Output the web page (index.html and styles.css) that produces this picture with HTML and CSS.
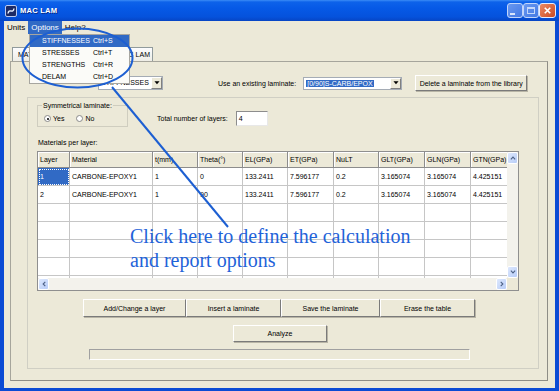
FILE: index.html
```html
<!DOCTYPE html>
<html lang="en">
<head>
    <meta charset="UTF-8">
    <meta name="viewport" content="width=device-width, initial-scale=1.0">
    <title>MAC LAM</title>
    <link rel="stylesheet" href="styles.css">
</head>
<body>
    <div class="window">
        <div class="titlebar">
            <svg class="app-icon" viewBox="0 0 12 12">
                <rect x="0.5" y="0.5" width="11" height="11" rx="1.5" fill="#1c2a66" stroke="#b9c9f0"/>
                <path d="M3 8.5 C4 2.5 8 9.5 9 3.5" fill="none" stroke="#e8f0ff" stroke-width="1.4"/>
            </svg>
            <span class="title">MAC LAM</span>
            <div class="controls">
                <span class="ctl ctl-min"><span class="min-bar"></span></span>
                <span class="ctl ctl-max"><span class="max-box"></span></span>
                <span class="ctl ctl-close">
                    <svg viewBox="0 0 10 10"><path d="M2.5 2.5 L7.5 7.5 M7.5 2.5 L2.5 7.5" stroke="#fff" stroke-width="1.5"/></svg>
                </span>
            </div>
        </div>

        <div class="frame">
            <div class="menubar">
                <span class="menu-item">Units</span>
                <span class="menu-item open">Options</span>
                <span class="menu-item">Help?</span>
            </div>

            <div class="tabs">
                <span class="tab tab-materials">MATERIALS</span>
                <span class="tab tab-lam">MAC LAM</span>
            </div>

            <div class="panel">
                <div class="top-row">
                    <div class="combo combo-units">
                        <span class="combo-value">STIFFNESSES</span>
                        <span class="combo-arrow"><svg viewBox="0 0 7 4"><path d="M0.5 0 L6.5 0 L3.5 3.5 Z" fill="#000"/></svg></span>
                    </div>
                    <span class="lib-label">Use an existing laminate:</span>
                    <div class="combo combo-lib">
                        <span class="combo-value"><span class="sel-text">[0/90]S-CARB/EPOX</span></span>
                        <span class="combo-arrow"><svg viewBox="0 0 7 4"><path d="M0.5 0 L6.5 0 L3.5 3.5 Z" fill="#000"/></svg></span>
                    </div>
                    <button class="btn btn-delete">Delete a laminate from the library</button>
                </div>

                <div class="group">
                    <div class="sym-row">
                        <div class="sym-box">
                            <span class="sym-legend">Symmetrical laminate:</span>
                            <div class="radios">
                                <span class="radio checked"></span><span class="radio-label">Yes</span>
                                <span class="radio"></span><span class="radio-label">No</span>
                            </div>
                        </div>
                        <span class="layers-label">Total number of layers:</span>
                        <span class="text-input">4</span>
                    </div>

                    <div class="caption">Materials per layer:</div>

                    <div class="grid-box">
                        <div class="grid-main">
                            <div class="grid-view">
                                <table class="grid">
                                    <colgroup>
                                        <col style="width:32px"><col style="width:83px"><col style="width:45px"><col style="width:45px"><col style="width:45px">
                                        <col style="width:46px"><col style="width:45px"><col style="width:46px"><col style="width:46px"><col style="width:46px">
                                    </colgroup>
                                    <thead>
                                        <tr><th>Layer</th><th>Material</th><th>t(mm)</th><th>Theta(°)</th><th>EL(GPa)</th><th>ET(GPa)</th><th>NuLT</th><th>GLT(GPa)</th><th>GLN(GPa)</th><th>GTN(GPa)</th></tr>
                                    </thead>
                                    <tbody>
                                        <tr><td class="current">1</td><td>CARBONE-EPOXY1</td><td>1</td><td>0</td><td>133.2411</td><td>7.596177</td><td>0.2</td><td>3.165074</td><td>3.165074</td><td>4.425151</td></tr>
                                        <tr><td>2</td><td>CARBONE-EPOXY1</td><td>1</td><td>90</td><td>133.2411</td><td>7.596177</td><td>0.2</td><td>3.165074</td><td>3.165074</td><td>4.425151</td></tr>
                                        <tr><td></td><td></td><td></td><td></td><td></td><td></td><td></td><td></td><td></td><td></td></tr>
                                        <tr><td></td><td></td><td></td><td></td><td></td><td></td><td></td><td></td><td></td><td></td></tr>
                                        <tr><td></td><td></td><td></td><td></td><td></td><td></td><td></td><td></td><td></td><td></td></tr>
                                        <tr><td></td><td></td><td></td><td></td><td></td><td></td><td></td><td></td><td></td><td></td></tr>
                                        <tr><td></td><td></td><td></td><td></td><td></td><td></td><td></td><td></td><td></td><td></td></tr>
                                    </tbody>
                                </table>
                            </div>
                            <div class="vscroll">
                                <span class="sb-btn"><svg viewBox="0 0 7 5"><path d="M1 4 L3.5 1.5 L6 4" fill="none" stroke="#4d6185" stroke-width="1.3"/></svg></span>
                                <span class="sb-track"></span>
                                <span class="sb-btn"><svg viewBox="0 0 7 5"><path d="M1 1 L3.5 3.5 L6 1" fill="none" stroke="#4d6185" stroke-width="1.3"/></svg></span>
                            </div>
                        </div>
                        <div class="hscroll">
                            <span class="sb-btn"><svg viewBox="0 0 5 7"><path d="M4 1 L1.5 3.5 L4 6" fill="none" stroke="#4d6185" stroke-width="1.3"/></svg></span>
                            <span class="sb-track"></span>
                            <span class="sb-btn"><svg viewBox="0 0 5 7"><path d="M1 1 L3.5 3.5 L1 6" fill="none" stroke="#4d6185" stroke-width="1.3"/></svg></span>
                            <span class="sb-corner"></span>
                        </div>
                    </div>

                    <div class="btn-row">
                        <button class="btn btn-wide">Add/Change a layer</button>
                        <button class="btn btn-mid">Insert a laminate</button>
                        <button class="btn btn-save">Save the laminate</button>
                        <button class="btn btn-mid">Erase the table</button>
                    </div>

                    <div class="analyze-row">
                        <button class="btn btn-analyze">Analyze</button>
                    </div>

                    <div class="progress"></div>
                </div>
            </div>
        </div>

        <!-- open Options menu -->
        <div class="dropdown">
            <div class="dd-item active"><span class="dd-label">STIFFNESSES</span><span>Ctrl+S</span></div>
            <div class="dd-item"><span class="dd-label">STRESSES</span><span>Ctrl+T</span></div>
            <div class="dd-item"><span class="dd-label">STRENGTHS</span><span>Ctrl+R</span></div>
            <div class="dd-item"><span class="dd-label">DELAM</span><span>Ctrl+D</span></div>
        </div>

        <!-- annotation -->
        <svg class="callout-shape" viewBox="0 0 559 391">
            <ellipse cx="77.5" cy="58" rx="55" ry="29.5" fill="none" stroke="#1d5fd2" stroke-width="2"/>
            <line x1="112" y1="87" x2="228" y2="227" stroke="#1d5fd2" stroke-width="2"/>
        </svg>
        <div class="callout-text">Click here to define the calculation<br>and report options</div>
    </div>
</body>
</html>
```

FILE: styles.css
```css
* {
    box-sizing: border-box;
}
html, body {
    margin: 0;
    padding: 0;
}
body {
    font-family: 'Liberation Sans', Arial, sans-serif;
    font-size: 7px;
    color: #000;
    background: #ece9d8;
}
.window {
    position: relative;
    width: 559px;
    height: 391px;
    overflow: hidden;
    display: flex;
    flex-direction: column;
}

/* title bar */
.titlebar {
    height: 21px;
    flex: none;
    display: flex;
    align-items: center;
    padding: 0 3px 0 5px;
    background: linear-gradient(#3b8cf6 0, #0d62ea 2px, #0659e6 40%, #0552dc 80%, #0745c4 100%);
    color: #fff;
}
.app-icon {
    width: 12px;
    height: 12px;
    margin-right: 3px;
}
.title {
    font-weight: bold;
    font-size: 7.6px;
    letter-spacing: 0.2px;
    text-shadow: 1px 1px 0 #0a2d8a;
}
.controls {
    margin-left: auto;
    display: flex;
}
.ctl {
    width: 16px;
    height: 15px;
    border: 1px solid #e4ecff;
    border-radius: 3px;
    display: flex;
    align-items: center;
    justify-content: center;
    background: linear-gradient(135deg, #7aa3f2, #4f80e6);
    opacity: 0.85;
}
.ctl-close {
    width: 17px;
    background: linear-gradient(135deg, #ea8a66, #cc4a22);
    opacity: 1;
}
.ctl-close svg {
    width: 11px;
    height: 11px;
}
.min-bar {
    width: 5px;
    height: 2px;
    background: #fff;
    margin: 7px 5px 0 0;
}
.max-box {
    width: 8px;
    height: 7px;
    border: 1px solid #e6eeff;
    border-top-width: 2px;
}

/* window body */
.frame {
    flex: 1;
    background: #ece9d8;
    border: 4px solid #0b4bd4;
    border-top: 0;
    border-bottom-width: 3px;
}
.menubar {
    height: 13px;
    display: flex;
    font-size: 8px;
}
.menu-item {
    padding: 0 3px;
    line-height: 13px;
}
.menu-item.open {
    background: #316ac5;
    color: #fff;
}

.tabs {
    margin-top: 13px;
    height: 14px;
    display: flex;
    padding-left: 8px;
}
.tab {
    line-height: 13px;
    border: 1px solid #919b9c;
    border-bottom: none;
    background: linear-gradient(#fcfcfe, #eeede6);
    padding: 0 5px;
}
.tab-materials {
    width: 100px;
}
.tab-lam {
    width: 41px;
    padding: 0 2px;
    text-align: right;
    white-space: nowrap;
}

.panel {
    margin-left: 6px;
    width: 538px;
    height: 320px;
    border: 1px solid #a6a59c;
    border-right-color: #8e8d86;
    border-bottom-color: #8e8d86;
    padding-top: 13px;
}
.top-row {
    height: 16px;
    display: flex;
    align-items: center;
}

.combo {
    height: 14px;
    display: flex;
    background: #fff;
    border: 1px solid #a5acb5;
}
.combo-value {
    flex: 1;
    padding: 0 2px;
    line-height: 12px;
    white-space: nowrap;
    overflow: hidden;
}
.combo-arrow {
    width: 11px;
    display: flex;
    align-items: center;
    justify-content: center;
    background: #ece9d8;
    border: 1px solid;
    border-color: #fff #808080 #808080 #fff;
}
.combo-arrow svg {
    width: 6px;
    height: 4px;
}
.combo-units {
    margin-left: 87px;
    width: 65px;
}
.lib-label {
    margin-left: 55px;
}
.combo-lib {
    margin-left: 7px;
    width: 99px;
    height: 13px;
}
.sel-text {
    background: #316ac5;
    color: #fff;
    padding: 0 1px;
}

.btn {
    font: inherit;
    color: #000;
    background: #ece9d8;
    border: 1px solid;
    border-color: #fff #7a7a7a #7a7a7a #fff;
    box-shadow: 1px 1px 0 #b8b5a6;
    padding: 0;
    margin: 0;
}
.btn-delete {
    margin-left: 13px;
    width: 112px;
    height: 16px;
}

/* inner frame */
.group {
    margin: 6px 0 0 16px;
    width: 512px;
    height: 272px;
    border: 1px solid #d0cfc4;
}
.sym-row {
    margin: 7px 0 0 9px;
    height: 22px;
    display: flex;
    align-items: center;
}
.sym-box {
    width: 91px;
    height: 22px;
    border: 1px solid #cfcdbf;
}
.sym-legend {
    display: inline-block;
    margin: -5px 0 0 4px;
    padding: 0 1px;
    line-height: 9px;
    background: #ece9d8;
    vertical-align: top;
}
.radios {
    display: flex;
    align-items: center;
    margin: 2px 0 0 6px;
}
.radio {
    width: 7px;
    height: 7px;
    border-radius: 50%;
    border: 1px solid #8a8a8a;
    background: #fff;
    margin-right: 2px;
    position: relative;
}
.radio.checked::after {
    content: "";
    position: absolute;
    left: 1.5px;
    top: 1.5px;
    width: 2px;
    height: 2px;
    border-radius: 50%;
    background: #000;
}
.radio-label {
    margin-right: 12px;
}
.layers-label {
    margin: 4px 0 0 29px;
}
.text-input {
    margin: 4px 0 0 8px;
    width: 32px;
    height: 15px;
    line-height: 13px;
    padding-left: 2px;
    background: #fff;
    border: 1px solid;
    border-color: #8d8d8d #e8e8e8 #e8e8e8 #8d8d8d;
}

.caption {
    margin: 11px 0 0 10px;
    line-height: 10px;
}

/* materials grid */
.grid-box {
    margin: 3px 0 0 9px;
    width: 482px;
    height: 140px;
    border: 1px solid #8f8f8f;
    display: flex;
    flex-direction: column;
    background: #fff;
}
.grid-main {
    height: 126px;
    display: flex;
}
.grid-view {
    width: 469px;
    overflow: hidden;
}
.grid {
    table-layout: fixed;
    border-collapse: separate;
    border-spacing: 0;
    width: 479px;
}
.grid th,
.grid td {
    padding: 0 0 0 2px;
    text-align: left;
    white-space: nowrap;
    overflow: hidden;
    font-weight: normal;
}
.grid th {
    height: 16px;
    background: #ece9d8;
    border-right: 1px solid #8c8c8c;
    border-bottom: 1px solid #8c8c8c;
    box-shadow: inset 1px 1px 0 #fff;
}
.grid td {
    height: 18px;
    background: #fff;
    border-right: 1px solid #c6c6c6;
    border-bottom: 1px solid #c6c6c6;
}
.grid td.current {
    background: #316ac5;
    color: #fff;
    outline: 1px dotted #fff;
    outline-offset: -2px;
}

.vscroll {
    width: 11px;
    display: flex;
    flex-direction: column;
    background: #f3f2ec;
}
.hscroll {
    height: 12px;
    display: flex;
    background: #f3f2ec;
}
.sb-track {
    flex: 1;
}
.sb-btn {
    flex: none;
    width: 11px;
    height: 12px;
    display: flex;
    align-items: center;
    justify-content: center;
    background: linear-gradient(135deg, #dde8fd, #b8cdf8);
    border: 1px solid #fff;
    border-radius: 2px;
}
.sb-btn svg {
    width: 6px;
    height: 6px;
}
.sb-corner {
    width: 11px;
    background: #ece9d8;
}

.btn-row {
    margin: 8px 0 0 55px;
    height: 18px;
    display: flex;
}
.btn-wide {
    width: 103px;
}
.btn-mid {
    width: 95px;
}
.btn-save {
    width: 99px;
}
.analyze-row {
    margin: 8px 0 0 205px;
    height: 17px;
    display: flex;
}
.btn-analyze {
    width: 94px;
}
.progress {
    margin: 7px 0 0 61px;
    width: 381px;
    height: 11px;
    border: 1px solid;
    border-color: #a0a0a0 #fff #fff #a0a0a0;
}

/* open menu */
.dropdown {
    position: absolute;
    left: 29px;
    top: 34px;
    width: 101px;
    height: 50px;
    background: #fbfbf8;
    border: 1px solid #a7a6a0;
    font-size: 7px;
}
.dd-item {
    height: 12px;
    line-height: 12px;
    display: flex;
    padding-left: 12px;
}
.dd-item.active {
    background: #316ac5;
    color: #fff;
}
.dd-label {
    width: 51px;
}

/* annotation */
.callout-shape {
    position: absolute;
    left: 0;
    top: 0;
    width: 559px;
    height: 391px;
    pointer-events: none;
}
.callout-text {
    position: absolute;
    left: 130px;
    top: 224px;
    font-family: 'Liberation Serif', 'Times New Roman', serif;
    font-size: 20px;
    line-height: 24px;
    color: #1f63d9;
    white-space: nowrap;
}
```
